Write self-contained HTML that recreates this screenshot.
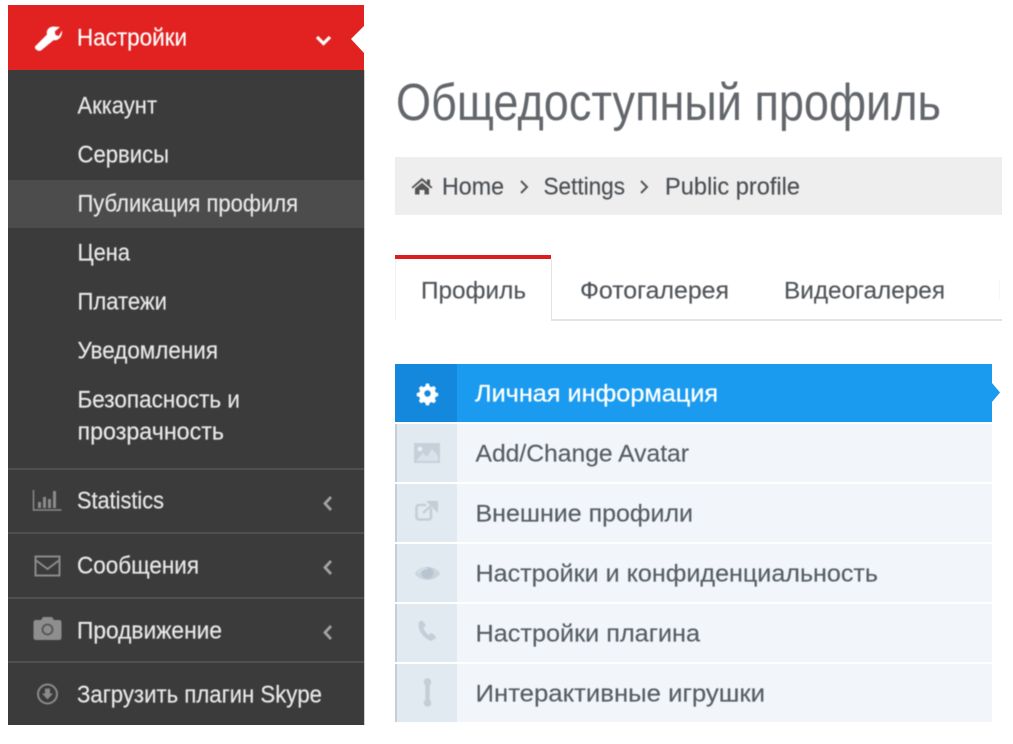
<!DOCTYPE html>
<html lang="ru"><head><meta charset="utf-8"><title>Настройки</title>
<style>
html,body{margin:0;padding:0;background:#fff;width:1013px;height:744px;overflow:hidden}
svg{display:block}
text{font-family:"Liberation Sans","DejaVu Sans",sans-serif}
.s text{fill:#e8e8e8;font-size:24px;stroke:#e8e8e8;stroke-width:.2px}
.n text{fill:#555d63;font-size:24px;stroke:#555d63;stroke-width:.15px}
.soft{filter:blur(.55px)}
</style></head><body>
<svg width="1013" height="744" viewBox="0 0 1013 744" xmlns="http://www.w3.org/2000/svg">
<rect width="1013" height="744" fill="#fff"/>
<!-- sidebar -->
<rect x="8" y="5" width="356" height="720" fill="#3b3b3b"/>
<rect x="364" y="70" width="1" height="655" fill="#cfcfcf"/>
<rect x="8" y="5" width="356" height="65" fill="#e22121"/>
<path d="M364 26L351 39L364 53Z" fill="#fff"/>
<rect x="8" y="180" width="356" height="48" fill="#4c4c4c"/>
<rect x="8" y="468" width="356" height="2" fill="#4f4f4f"/>
<rect x="8" y="532" width="356" height="2" fill="#4f4f4f"/>
<rect x="8" y="597" width="356" height="2" fill="#4f4f4f"/>
<rect x="8" y="661" width="356" height="2" fill="#4f4f4f"/>
<g class="soft">
<!-- wrench -->
<path d="M35 46.500L47 34.500C45.800 30.500 48.500 27 53 26.500L60 27L54.800 31.500L55.500 35L58.800 36L62 30.500C62.800 36 59 41 53.500 40.200L41 50.500C38.500 52 34 49 35 46.500Z" fill="#fff"/>
<path d="M317 37l6.500 6.500 6.500-6.500" fill="none" stroke="#fff" stroke-width="3.200"/>
<g class="s">
<text x="77" y="45.500" textLength="110" lengthAdjust="spacingAndGlyphs" style="fill:#fff;stroke:#fff">Настройки</text>
<text x="77.500" y="113.500" textLength="79.500" lengthAdjust="spacingAndGlyphs">Аккаунт</text>
<text x="77.500" y="162.500" textLength="91.500" lengthAdjust="spacingAndGlyphs">Сервисы</text>
<text x="77.500" y="211.500" textLength="220.500" lengthAdjust="spacingAndGlyphs">Публикация профиля</text>
<text x="77.500" y="260.500" textLength="52.500" lengthAdjust="spacingAndGlyphs">Цена</text>
<text x="77.500" y="309.500" textLength="89.500" lengthAdjust="spacingAndGlyphs">Платежи</text>
<text x="77.500" y="358.500" textLength="140.500" lengthAdjust="spacingAndGlyphs">Уведомления</text>
<text x="77.500" y="407.500" textLength="162.500" lengthAdjust="spacingAndGlyphs">Безопасность и</text>
<text x="77.500" y="439.500" textLength="146.500" lengthAdjust="spacingAndGlyphs">прозрачность</text>
<text x="77" y="508.500" textLength="87" lengthAdjust="spacingAndGlyphs">Statistics</text>
<text x="77" y="573.500" textLength="122" lengthAdjust="spacingAndGlyphs">Сообщения</text>
<text x="77" y="638.500" textLength="145" lengthAdjust="spacingAndGlyphs">Продвижение</text>
<text x="77" y="702.500" textLength="245" lengthAdjust="spacingAndGlyphs">Загрузить плагин Skype</text>
</g>
<g fill="none" stroke="#a2a2a2" stroke-width="2.800">
<path d="M331 497l-6 6.500 6 6.500"/>
<path d="M331 561l-6 6.500 6 6.500"/>
<path d="M331 626l-6 6.500 6 6.500"/>
</g>
<!-- stats -->
<path d="M33.500 490V510H61.500" fill="none" stroke="#8b8b8b" stroke-width="1.500"/>
<g fill="#8b8b8b"><rect x="38" y="502" width="3" height="6"/><rect x="43" y="497" width="3" height="11"/><rect x="48" y="499" width="3" height="9"/><rect x="53" y="491" width="3" height="17"/></g>
<!-- mail -->
<path d="M35.500 556.500H59.500V575.500H35.500ZM35.500 560L47.500 569L59.500 560" fill="none" stroke="#8b8b8b" stroke-width="2"/>
<!-- camera -->
<path d="M36 620H41L43 617H52L54 620H59C60.500 620 61.500 621 61.500 622.500V637.500C61.500 639 60.500 640 59 640H36C34.500 640 33.500 639 33.500 637.500V622.500C33.500 621 34.500 620 36 620Z" fill="#8e8e8e"/>
<circle cx="47.500" cy="629.500" r="5" fill="#8e8e8e" stroke="#555" stroke-width="1.800"/>
<!-- download -->
<circle cx="47.500" cy="694" r="9.500" fill="none" stroke="#8b8b8b" stroke-width="2"/>
<path d="M45 688.500h5v5h3l-5.500 6-5.500-6h3z" fill="#8b8b8b"/>
<!-- title -->
<text x="396" y="120" textLength="545" lengthAdjust="spacingAndGlyphs" font-size="52" fill="#63676c">Общедоступный профиль</text>
</g>
<!-- breadcrumb -->
<rect x="395" y="157" width="607" height="58" fill="#eeeeee"/>
<g class="soft">
<path d="M422 178L427 182.300V179.500H430V185L432.500 187.200L431.200 188.500L422 180.800L412.800 188.500L411.500 187.200ZM415 188.500L422 182.800L429 188.500V194.500H424.500V190H419.500V194.500H415Z" fill="#555"/>
<g font-size="24" fill="#4a4e53" stroke="#4a4e53" stroke-width=".15">
<text x="442" y="194.500" textLength="62" lengthAdjust="spacingAndGlyphs">Home</text>
<text x="543.500" y="194.500" textLength="81.500" lengthAdjust="spacingAndGlyphs">Settings</text>
<text x="665" y="194.500" textLength="135" lengthAdjust="spacingAndGlyphs">Public profile</text>
</g>
<path d="M521 181l6 6-6 6M641 181l6 6-6 6" fill="none" stroke="#555" stroke-width="2"/>
</g>
<!-- tabs -->
<rect x="551" y="319" width="451" height="2" fill="#e3e3e3"/>
<rect x="395" y="259" width="1" height="61" fill="#f0f0f0"/>
<rect x="551" y="259" width="1" height="61" fill="#e3e3e3"/>
<rect x="395" y="255" width="156" height="4" fill="#dd1c1c"/>
<rect x="999" y="280" width="1" height="20" fill="#fbf6ea"/>
<g class="soft" font-size="24" fill="#50555a" stroke="#50555a" stroke-width=".15">
<text x="421" y="298.500" textLength="105" lengthAdjust="spacingAndGlyphs">Профиль</text>
<text x="580" y="298.500" textLength="149" lengthAdjust="spacingAndGlyphs">Фотогалерея</text>
<text x="784" y="298.500" textLength="161" lengthAdjust="spacingAndGlyphs">Видеогалерея</text>
</g>
<!-- list -->
<rect x="395" y="364" width="597" height="58" fill="#1a9bf0"/>
<rect x="395" y="364" width="62" height="58" fill="#1488dc"/>
<path d="M992 383L1000 392.500L992 402Z" fill="#1a9bf0"/>
<g fill="#f2f6fa">
<rect x="395" y="424" width="597" height="58"/>
<rect x="395" y="484" width="597" height="58"/>
<rect x="395" y="544" width="597" height="58"/>
<rect x="395" y="604" width="597" height="58"/>
<rect x="395" y="664" width="597" height="58"/>
</g>
<g fill="#e2eaf1">
<rect x="395" y="424" width="62" height="58"/>
<rect x="395" y="484" width="62" height="58"/>
<rect x="395" y="544" width="62" height="58"/>
<rect x="395" y="604" width="62" height="58"/>
<rect x="395" y="664" width="62" height="58"/>
</g>
<g fill="#c3d0db">
<rect x="395" y="424" width="2" height="58"/>
<rect x="395" y="484" width="2" height="58"/>
<rect x="395" y="544" width="2" height="58"/>
<rect x="395" y="604" width="2" height="58"/>
<rect x="395" y="664" width="2" height="58"/>
</g>
<g class="soft">
<!-- gear -->
<path d="M426 383.500h3l.6 2.700 2 .9 2.200-1.200 2.300 2.300-1.200 2.200.8 2 2.500.7v3l-2.500.7-.8 2 1.200 2.200-2.300 2.300-2.200-1.200-2 .8-.6 2.500h-3l-.7-2.500-2-.8-2.200 1.200-2.300-2.300 1.200-2.200-.8-2-2.500-.7v-3l2.500-.7.800-2-1.200-2.200 2.300-2.300 2.200 1.200 2-.9z" fill="#fff"/>
<circle cx="427.500" cy="393.500" r="3.200" fill="#1488dc"/>
<!-- image -->
<rect x="414" y="443" width="26" height="20" fill="#c5d0da"/>
<circle cx="420" cy="449" r="2.300" fill="#eaf0f5"/>
<path d="M416 461L423 453L427 457L432 449L438 456V461Z" fill="#d9e2ea"/>
<!-- external link -->
<path d="M431 508V517C431 518.500 430 519.500 428.500 519.500H419C417.500 519.500 416.500 518.500 416.500 517V507.500C416.500 506 417.500 505 419 505H426" fill="none" stroke="#c3ced8" stroke-width="2.600"/>
<path d="M423 513L434 503M428.500 502H437V510.500Z" fill="#c3ced8" stroke="#c3ced8" stroke-width="2.200"/>
<!-- eye -->
<path d="M415 573.500C419 565 436 565 440 573.500C436 582 419 582 415 573.500Z" fill="#c9d4dd"/>
<circle cx="427.500" cy="573" r="6" fill="#b8c5d0"/>
<path d="M418 573.500C421 569.500 424 568.500 427.500 568.500" fill="none" stroke="#dde5ec" stroke-width="1.300"/>
<!-- phone -->
<path d="M419 622C417 630 423 638 431 641L436 638C436 636 433 633.500 431 633L428.500 635C426 633 424 630 423.500 628L425.500 625.500C425 623 422.500 620.500 421 620.500Z" fill="#c3ced8"/>
<!-- resize -->
<path d="M427.500 682V703" stroke="#c3ced8" stroke-width="4.500"/>
<circle cx="427.500" cy="682" r="3.800" fill="#c3ced8"/>
<circle cx="427.500" cy="703" r="3.800" fill="#c3ced8"/>
<g font-size="24" fill="#555d63" stroke="#555d63" stroke-width=".15">
<text x="475" y="401.500" textLength="243" lengthAdjust="spacingAndGlyphs" fill="#fff" stroke="#fff" stroke-width=".3">Личная информация</text>
<text x="475.500" y="461.500" textLength="213.500" lengthAdjust="spacingAndGlyphs">Add/Change Avatar</text>
<text x="475.500" y="521.500" textLength="217.500" lengthAdjust="spacingAndGlyphs">Внешние профили</text>
<text x="475.500" y="581.500" textLength="402.500" lengthAdjust="spacingAndGlyphs">Настройки и конфиденциальность</text>
<text x="475.500" y="641.500" textLength="224.500" lengthAdjust="spacingAndGlyphs">Настройки плагина</text>
<text x="475.500" y="701.500" textLength="289.500" lengthAdjust="spacingAndGlyphs">Интерактивные игрушки</text>
</g>
</g>
</svg>
</body></html>
